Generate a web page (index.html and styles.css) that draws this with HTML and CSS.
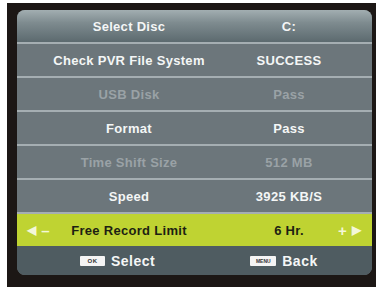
FILE: index.html
```html
<!DOCTYPE html>
<html>
 <head>
  <meta charset="UTF-8">
  <title>PVR</title>
  <link rel="stylesheet" href="styles.css">
 </head>
 <body>
  <div id="frame">
   <div id="panel">
    <div class="row head">
     <span class="name">Select Disc</span><span class="val">C:</span>
    </div>
    <div class="row">
     <span class="name">Check PVR File System</span><span class="val">SUCCESS</span>
    </div>
    <div class="row off">
     <span class="name">USB Disk</span><span class="val">Pass</span>
    </div>
    <div class="row">
     <span class="name">Format</span><span class="val">Pass</span>
    </div>
    <div class="row off">
     <span class="name">Time Shift Size</span><span class="val">512 MB</span>
    </div>
    <div class="row">
     <span class="name">Speed</span><span class="val">3925 KB/S</span>
    </div>
    <div class="row on">
     <span class="left"><i class="tri">&#9664;</i><i>&ndash;</i></span><span class="name">Free Record Limit</span><span class="val">6 Hr.</span><span class="right"><i>+</i><i class="tri">&#9654;</i></span>
    </div>
    <div id="foot">
     <div class="key"><span class="badge">OK</span>Select</div>
     <div class="key back"><span class="badge menu">MENU</span>Back</div>
    </div>
   </div>
  </div>
 </body>
</html>
```

FILE: styles.css
```css
*{ margin:0; padding:0;}

body{
 background:#fff;
 font-family:"Liberation Sans", Arial, sans-serif;
 font-weight:bold;
}

#frame{
 width:369px;
 height:284px;
 margin:3px 0 0 7px;
 padding:7px 4px 0 10px;
 box-sizing:border-box;
 background:#1c1715;
}

#panel{
 width:355px;
 height:265px;
 background:#6c767b;
 border-radius:8px;
 overflow:hidden;
 display:flex;
 flex-direction:column;
}

.row{
 display:grid;
 grid-template-columns:44px 180px 96px 1fr;
 align-items:center;
 height:34px;
 border-top:2px solid #a5aeb2;
 box-sizing:border-box;
 color:#f4f6f6;
 font-size:13px;
 letter-spacing:0.3px;
 text-align:center;
}
.row .name{ grid-column:1 / 3; grid-row:1;}
.row .val{ grid-column:3; grid-row:1;}

.row.head{
 height:32px;
 border-top:none;
 background:linear-gradient(#a2aeb1, #7e8b8f 40%, #5c6a6f);
}

.row.off{ color:#9aa2a6;}

.row.on{
 background:#bfd332;
 color:#1d1f12;
}
.row.on .left,
.row.on .right{
 grid-row:1;
 display:flex;
 align-items:center;
 gap:5px;
 color:#f3f7d8;
 font-size:15px;
}
.row.on .left{ grid-column:1; padding-left:10px;}
.row.on .right{ grid-column:4; padding-left:1px;}
.row.on i{ font-style:normal;}
.row.on .tri{ font-size:12px;}

#foot{
 flex:1;
 background:#4f5c61;
 display:flex;
 align-items:center;
 color:#f4f6f6;
 font-size:14px;
 letter-spacing:0.5px;
}
#foot .key{
 display:flex;
 align-items:center;
 gap:6px;
 margin-left:63px;
}
#foot .key.back{ margin-left:95px;}

.badge{
 display:inline-block;
 width:25px;
 height:10px;
 background:#f4f4f4;
 color:#333;
 font-size:6px;
 line-height:10px;
 letter-spacing:0.5px;
 text-align:center;
 border-radius:1px;
}
.badge.menu{ width:26px; font-size:5px; letter-spacing:0;}
```
